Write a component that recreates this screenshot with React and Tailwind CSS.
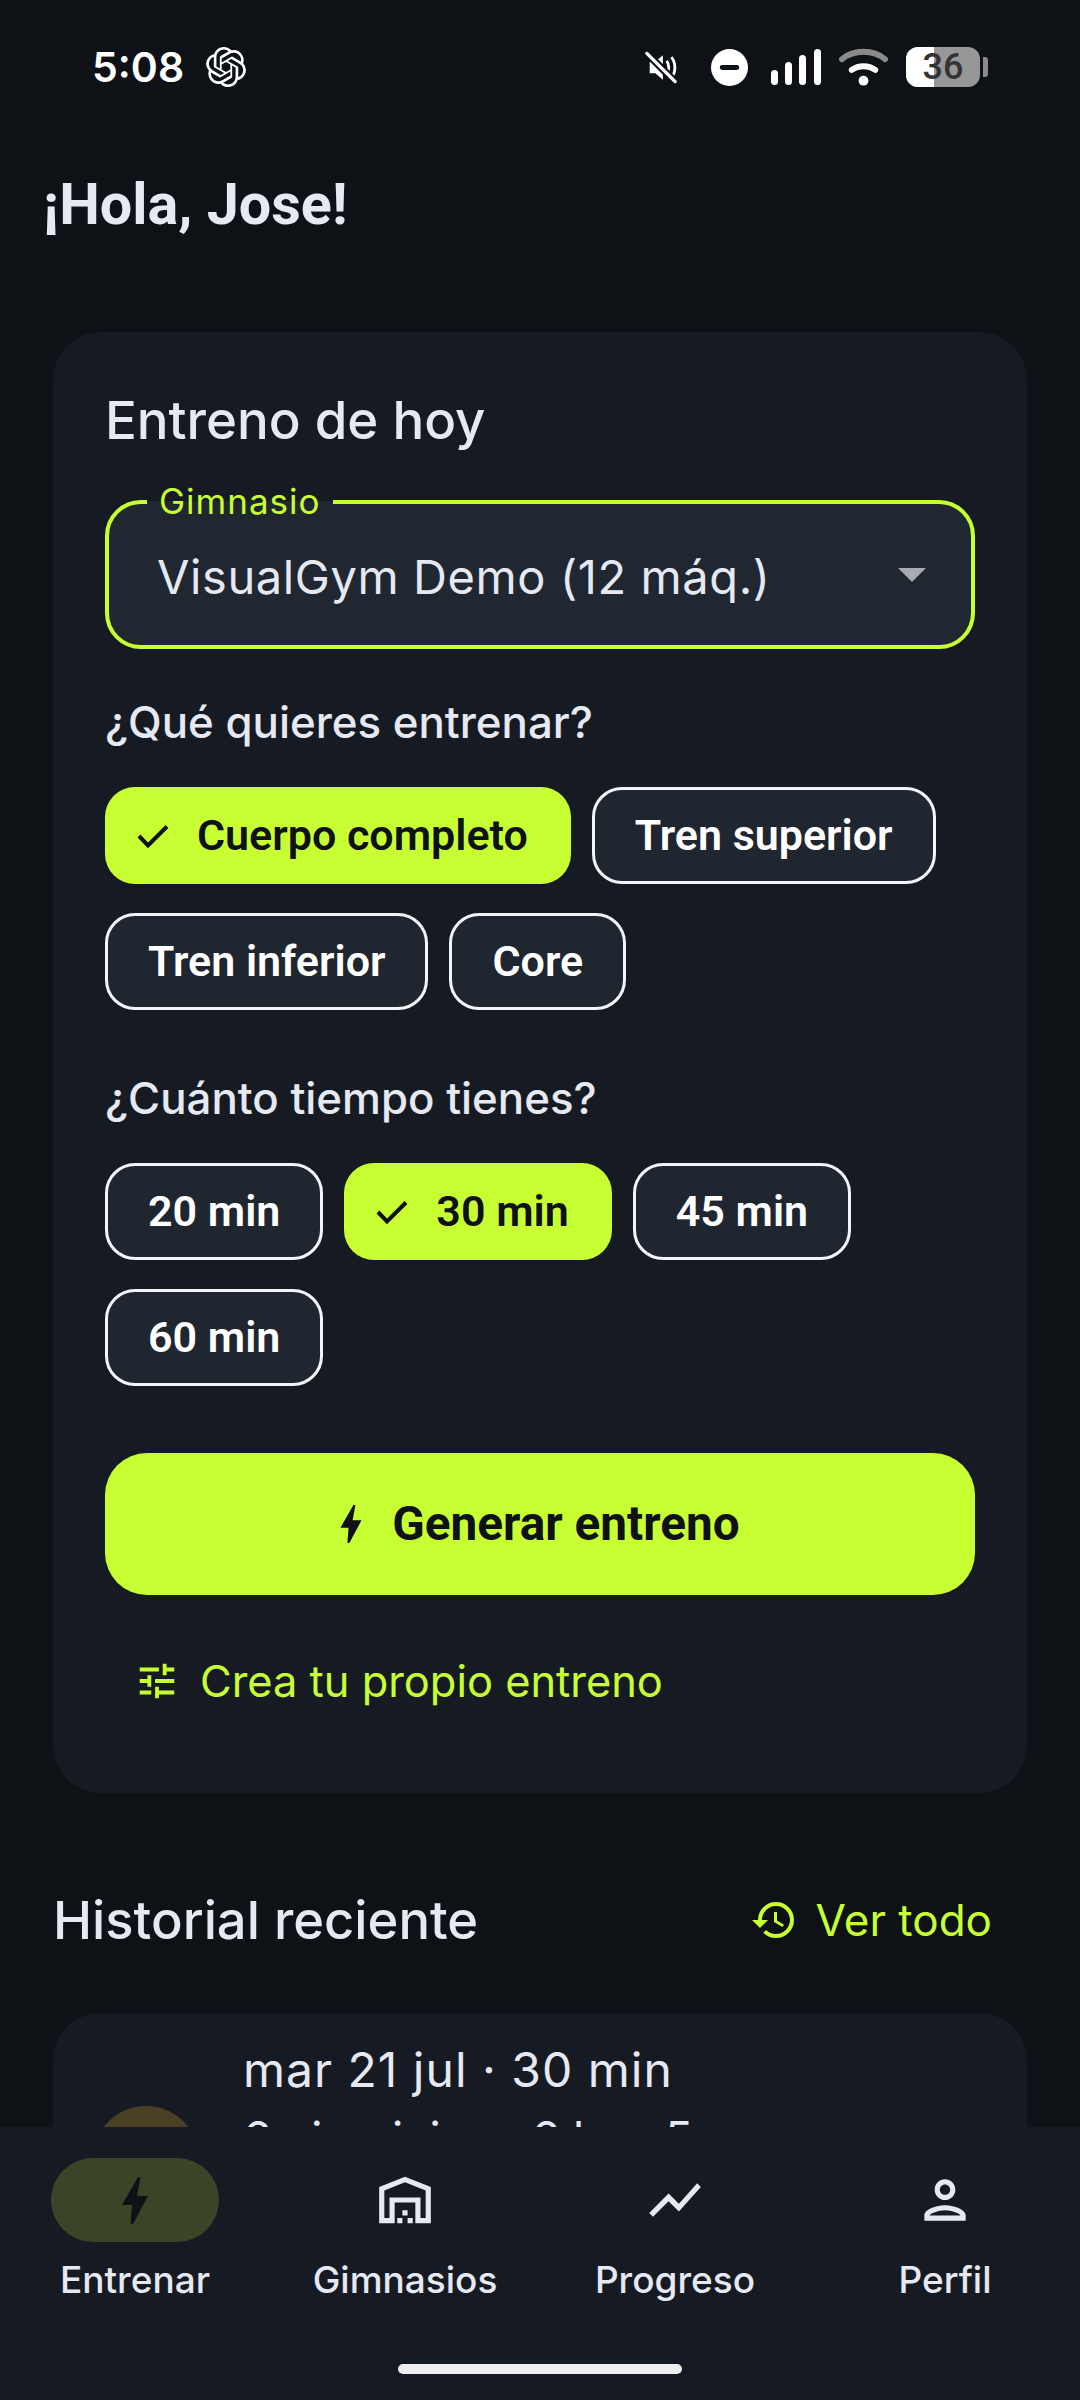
import React from 'react'
import {
  MdHistory,
  MdOutlinePerson,
  MdOutlineWarehouse,
  MdShowChart,
  MdTune,
} from 'react-icons/md'
import { SiOpenai } from 'react-icons/si'

const lime = 'text-[#c8ff33]'

const BoltIcon = ({ width, height, className }) => (
  <svg width={width} height={height} viewBox="0 0 26 47" className={className} fill="currentColor">
    <polygon points="16,0 18.5,0 15,19 26,19 11,47 8.5,47 10,28 0,28" />
  </svg>
)

const CheckIcon = () => (
  <svg width="40" height="40" viewBox="0 0 40 40" className="mr-[24px]" fill="none" stroke="currentColor" strokeWidth="4">
    <polyline points="6,20 15,29.5 34,10.5" />
  </svg>
)

const Chip = ({ label, selected }) =>
  selected ? (
    <div className="h-[97px] flex items-center pl-[28px] pr-[43px] rounded-[30px] bg-[#c8ff33] text-[#0e1116] font-['Roboto',sans-serif] font-semibold text-[43px]">
      <CheckIcon />
      {label}
    </div>
  ) : (
    <div className="h-[97px] flex items-center px-[40px] rounded-[30px] border-[3px] border-[#f2f4f8] bg-[#1f2630] text-white font-['Roboto',sans-serif] font-semibold text-[43px]">
      {label}
    </div>
  )

const StatusBar = () => (
  <div className="h-[134px] flex items-center justify-between pl-[92px] pr-[92px] text-white">
    <div className="flex items-center gap-[22px]">
      <span className="font-['Inter',sans-serif] font-semibold text-[41px] leading-none">5:08</span>
      <SiOpenai size={40} />
    </div>
    <div className="flex items-center">
      <svg width="32" height="33" viewBox="0 0 34 34" className="mr-[34px]">
        <path d="M5 11h6l8-7v26l-8-7H5z" fill="white" />
        <path d="M23 10c3 4 3 10 0 14M28 6c5 6 5 16 0 22" stroke="white" strokeWidth="3" fill="none" />
        <path d="M1 1l32 32" stroke="#0e1116" strokeWidth="8" />
        <path d="M2 2l30 30" stroke="white" strokeWidth="3.5" strokeLinecap="round" />
      </svg>
      <svg width="37" height="37" viewBox="0 0 38 38" className="mr-[23px]">
        <circle cx="19" cy="19" r="19" fill="white" />
        <rect x="9" y="16.5" width="20" height="5" rx="2.5" fill="#0e1116" />
      </svg>
      <svg width="50" height="38" viewBox="0 0 50 38" className="mr-[18px]">
        <rect x="0" y="22" width="7" height="15" rx="3.5" fill="white" />
        <rect x="14" y="14" width="7" height="23" rx="3.5" fill="white" />
        <rect x="28" y="7" width="7" height="30" rx="3.5" fill="white" />
        <rect x="43" y="1" width="7" height="36" rx="3.5" fill="white" />
      </svg>
      <svg width="49" height="38" viewBox="0 0 50 38" className="mr-[18px]">
        <path d="M3 11c12-10 32-10 44 0" stroke="#8a8a8a" strokeWidth="6" strokeLinecap="round" fill="none" />
        <path d="M13 22c7-5 17-5 24 0" stroke="white" strokeWidth="6" strokeLinecap="round" fill="none" />
        <circle cx="25" cy="33" r="5" fill="white" />
      </svg>
      <div className="relative w-[74px] h-[40px] rounded-[12px] overflow-hidden flex bg-[#979797]">
        <div className="w-[28px] bg-white" />
        <span className="absolute inset-0 flex items-center justify-center font-['Roboto',sans-serif] font-medium text-[36px] leading-none text-[#333333]">36</span>
      </div>
      <div className="w-[5px] h-[20px] ml-[3px] rounded-r-[3px] bg-[#8a8a8a]" />
    </div>
  </div>
)

const NavItem = ({ icon: Icon, label, active }) => (
  <div className="flex-1 flex flex-col items-center">
    <div className={`w-[168px] h-[84px] rounded-[42px] flex items-center justify-center ${active ? 'bg-[#3a4426] text-[#0e1116]' : 'text-[#e6e9f2]'}`}>
      {active ? <BoltIcon width={26} height={47} /> : <Icon size={62} />}
    </div>
    <span className="mt-[16px] font-['Inter',sans-serif] font-medium text-[37px] leading-[44px] text-[#e6e9f2]">{label}</span>
  </div>
)

export default function App() {
  return (
    <div className="w-[1080px] h-[2400px] flex flex-col overflow-hidden bg-[#0e1116] font-['Inter',sans-serif] text-[#e6e9f2]">
      <div className="flex-1 min-h-0 overflow-hidden">
        <StatusBar />
        <h1 className="mt-[38px] ml-[43px] font-['Roboto',sans-serif] font-bold text-[57.5px] leading-[66px]">¡Hola, Jose!</h1>

        <section className="mt-[94px] mx-[53px] h-[1461px] rounded-[48px] bg-[#161b23] px-[52px] pt-[57px]">
          <h2 className="text-[52.8px] leading-[62px] font-medium">Entreno de hoy</h2>

          <div className="relative mt-[49px] h-[149px] rounded-[36px] border-[4px] border-[#c8ff33] bg-[#202731] flex items-center justify-between pl-[48px] pr-[45px]">
            <span className={`absolute -top-[21px] left-[38px] px-[12px] bg-[linear-gradient(to_bottom,#161b23_50%,#202731_50%)] text-[35px] leading-[36px] tracking-[1px] ${lime}`}>Gimnasio</span>
            <span className="pt-[5px] text-[47px] tracking-[0.6px]">VisualGym Demo (12 máq.)</span>
            <div className="w-0 h-0 border-l-[14px] border-r-[14px] border-t-[14px] border-l-transparent border-r-transparent border-t-[#a8aab0]" />
          </div>

          <p className="mt-[48px] text-[43.8px] leading-[52px] font-medium">¿Qué quieres entrenar?</p>
          <div className="mt-[38px] flex flex-wrap gap-x-[21px] gap-y-[29px]">
            <Chip label="Cuerpo completo" selected />
            <Chip label="Tren superior" />
            <Chip label="Tren inferior" />
            <Chip label="Core" />
          </div>

          <p className="mt-[63px] text-[43.8px] leading-[52px] font-medium">¿Cuánto tiempo tienes?</p>
          <div className="mt-[38px] flex flex-wrap gap-x-[21px] gap-y-[29px]">
            <Chip label="20 min" />
            <Chip label="30 min" selected />
            <Chip label="45 min" />
            <Chip label="60 min" />
          </div>

          <button className="mt-[67px] w-full h-[142px] rounded-[42px] bg-[#c8ff33] flex items-center justify-center text-[#0e1116] font-['Roboto',sans-serif] font-bold text-[47.7px]">
            <BoltIcon width={22} height={38} className="mr-[30px]" />
            <span className="pt-[2px]">Generar entreno</span>
          </button>

          <div className={`mt-[59px] ml-[29px] flex items-center text-[43.4px] leading-[54px] ${lime}`}>
            <MdTune size={46} className="mr-[20px]" />
            Crea tu propio entreno
          </div>
        </section>

        <div className="mt-[96px] ml-[53px] mr-[88px] flex items-center justify-between">
          <h2 className="text-[52.5px] leading-[62px] font-medium">Historial reciente</h2>
          <div className={`flex items-center text-[44px] leading-[54px] ${lime}`}>
            <MdHistory size={48} className="mr-[18px]" />
            Ver todo
          </div>
        </div>

        <section className="mt-[62px] mx-[53px] h-[300px] rounded-[48px] bg-[#161b23] pl-[190px] pt-[29px] relative">
          <p className="text-[48px] leading-[56px] tracking-[1px]">mar 21 jul · 30 min</p>
          <p className="mt-[15px] text-[46px] leading-[50px] text-[#e6e9f2]">6 ejercicios · 6 kg · 5</p>
          <div className="absolute left-[40px] top-[93px] w-[106px] h-[106px] rounded-full bg-[#4a4023]" />
        </section>
      </div>

      <nav className="h-[273px] shrink-0 bg-[#161b23] pt-[31px] flex flex-col">
        <div className="flex">
          <NavItem label="Entrenar" active />
          <NavItem icon={MdOutlineWarehouse} label="Gimnasios" />
          <NavItem icon={MdShowChart} label="Progreso" />
          <NavItem icon={MdOutlinePerson} label="Perfil" />
        </div>
        <div className="mt-[62px] mx-auto w-[284px] h-[10px] rounded-full bg-[#eeeeee]" />
      </nav>
    </div>
  )
}
